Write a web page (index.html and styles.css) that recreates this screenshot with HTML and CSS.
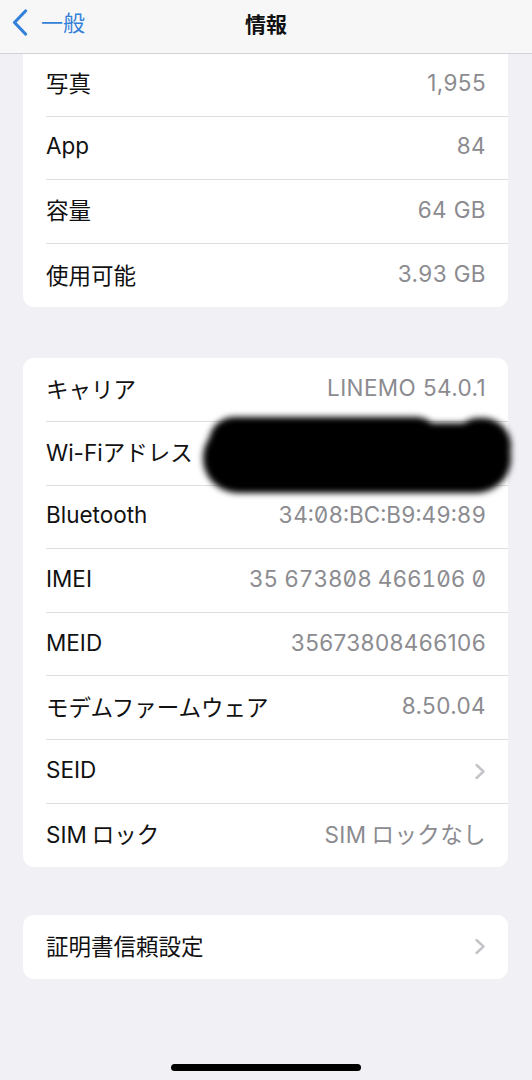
FILE: index.html
```html
<!DOCTYPE html>
<html lang="ja">
<head>
    <meta charset="UTF-8">
    <meta name="viewport" content="width=device-width, initial-scale=1.0">
    <title>情報</title>
    <link rel="stylesheet" href="styles.css">
</head>
<body>
    <header class="nav-bar">
        <a class="back" href="#">
            <svg class="back-icon" width="16" height="27" viewBox="0 0 16 27">
                <path d="M13.5 2 L2.5 13.5 L13.5 25" fill="none" stroke="currentColor" stroke-width="3.2" stroke-linecap="round" stroke-linejoin="round"/>
            </svg>
            <span>一般</span>
        </a>
        <h1 class="nav-title">情報</h1>
    </header>

    <main class="content">
        <section class="card card-top">
            <div class="row"><span class="label">写真</span><span class="value">1,955</span></div>
            <div class="row"><span class="label">App</span><span class="value">84</span></div>
            <div class="row"><span class="label">容量</span><span class="value">64 GB</span></div>
            <div class="row"><span class="label">使用可能</span><span class="value">3.93 GB</span></div>
        </section>

        <section class="card card-mid">
            <div class="row"><span class="label">キャリア</span><span class="value">LINEMO 54.0.1</span></div>
            <div class="row row-wifi">
                <span class="label">Wi-Fiアドレス</span>
                <div class="redact">
                    <div class="blot blot-main"></div>
                    <div class="blot blot-left"></div>
                    <div class="blot blot-right"></div>
                </div>
            </div>
            <div class="row"><span class="label">Bluetooth</span><span class="value slashed">34:08:BC:B9:49:89</span></div>
            <div class="row"><span class="label">IMEI</span><span class="value slashed">35 673808 466106 0</span></div>
            <div class="row"><span class="label">MEID</span><span class="value">35673808466106</span></div>
            <div class="row"><span class="label">モデムファームウェア</span><span class="value">8.50.04</span></div>
            <div class="row">
                <span class="label">SEID</span>
                <svg class="chevron" width="12" height="17" viewBox="0 0 12 17">
                    <path d="M2.5 2 L9.5 8.5 L2.5 15" fill="none" stroke="currentColor" stroke-width="2.4" stroke-linecap="round" stroke-linejoin="round"/>
                </svg>
            </div>
            <div class="row"><span class="label">SIM<span class="gap"></span>ロック</span><span class="value">SIM<span class="gap"></span>ロックなし</span></div>
        </section>

        <section class="card card-bottom">
            <div class="row">
                <span class="label">証明書信頼設定</span>
                <svg class="chevron" width="12" height="17" viewBox="0 0 12 17">
                    <path d="M2.5 2 L9.5 8.5 L2.5 15" fill="none" stroke="currentColor" stroke-width="2.4" stroke-linecap="round" stroke-linejoin="round"/>
                </svg>
            </div>
        </section>
    </main>

    <div class="home-bar"></div>
</body>
</html>
```

FILE: styles.css
```css
body {
    margin: 0;
    padding: 0;
    height: 1080px;
    overflow: hidden;
    background: #f0f0f5;
    font-family: Inter, "Noto Sans CJK JP", sans-serif;
    color: #111;
    position: relative;
}

.nav-bar {
    height: 53px;
    background: #f7f7f8;
    border-bottom: 1px solid #d3d3d7;
    display: flex;
    align-items: center;
    justify-content: center;
    position: relative;
}

.back {
    position: absolute;
    left: 12px;
    top: 8px;
    display: flex;
    align-items: center;
    gap: 13px;
    color: #3481d9;
    text-decoration: none;
    font-size: 22px;
}

.back span {
    margin-top: -3px;
}

.back-icon {
    display: block;
}

.nav-title {
    margin: 0;
    font-size: 21px;
    font-weight: 700;
    margin-top: -8px;
}

.content {
    padding: 0 24px 0 23px;
}

.card {
    background: #fff;
    border-radius: 11px;
    padding-left: 23px;
}

.card-top {
    border-radius: 0 0 11px 11px;
    margin-top: -1px;
}

.card-mid {
    margin-top: 51px;
}

.card-bottom {
    margin-top: 48px;
}

.row {
    height: 63.6px;
    box-sizing: border-box;
    padding-right: 22px;
    padding-bottom: 4px;
    display: flex;
    align-items: center;
    justify-content: space-between;
    border-bottom: 1px solid #dedee1;
    font-size: 22.5px;
    position: relative;
}

.row:last-child {
    border-bottom: none;
}

.label {
    color: #111;
}

.value {
    color: #8b8b90;
    letter-spacing: 0.4px;
}

.slashed {
    font-feature-settings: "zero" 1, "tnum" 1;
    letter-spacing: 0;
}

.gap {
    display: inline-block;
    width: 5px;
}

.chevron {
    color: #c4c4c8;
    display: block;
    margin-top: 4px;
}

.redact {
    position: absolute;
    left: 155px;
    top: -7px;
    width: 320px;
    height: 84px;
    filter: blur(3px);
}

.blot {
    position: absolute;
    background: #000;
}

.blot-main {
    left: 2px;
    top: 8px;
    width: 308px;
    height: 70px;
    border-radius: 35px;
}

.blot-left {
    left: 8px;
    top: 2px;
    width: 232px;
    height: 50px;
    border-radius: 25px;
}

.blot-right {
    left: 250px;
    top: 3px;
    width: 60px;
    height: 56px;
    border-radius: 28px;
}

.home-bar {
    position: absolute;
    left: 171px;
    top: 1064px;
    width: 190px;
    height: 7px;
    border-radius: 4px;
    background: #000;
}
```
